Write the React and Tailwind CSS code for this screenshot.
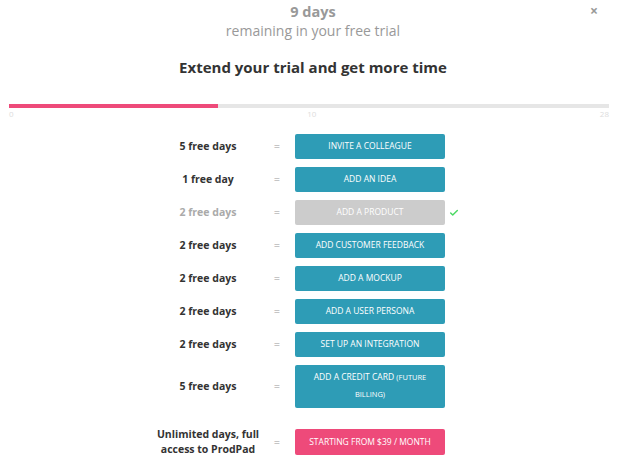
import { Check } from 'lucide-react';

const rows = [
  { label: '5 free days', action: 'INVITE A COLLEAGUE' },
  { label: '1 free day', action: 'ADD AN IDEA' },
  { label: '2 free days', action: 'ADD A PRODUCT', done: true },
  { label: '2 free days', action: 'ADD CUSTOMER FEEDBACK' },
  { label: '2 free days', action: 'ADD A MOCKUP' },
  { label: '2 free days', action: 'ADD A USER PERSONA' },
  { label: '2 free days', action: 'SET UP AN INTEGRATION' },
];

export default function App() {
  return (
    <div className="relative w-[626px] h-[468px] bg-white overflow-hidden" style={{ fontFamily: '"Open Sans", sans-serif' }}>
      <button className="absolute right-[28px] top-[4px] text-[14px] font-bold text-[#999] leading-none">×</button>

      <div className="flex flex-col items-center pt-[3px]">
        <p className="text-[14.5px] font-bold text-[#999] leading-[18px]">9 days</p>
        <p className="text-[14px] text-[#999] leading-[20px]">remaining in your free trial</p>
        <h1 className="mt-[16px] text-[15px] font-bold text-[#333] leading-[20px]">Extend your trial and get more time</h1>
      </div>

      {/* trial progress */}
      <div className="ml-[9px] mt-[27px] w-[600px]">
        <div className="h-[4px] bg-[#e6e6e6]">
          <div className="h-full w-[209px] bg-[#ee4a7a]" />
        </div>
        <div className="flex justify-between text-[8px] text-[#ddd] leading-[10px] mt-[1px]">
          <span>0</span>
          <span className="pl-[10px]">10</span>
          <span>28</span>
        </div>
      </div>

      <div className="mt-[15px] ml-[148px] flex flex-col gap-[8px]">
        {rows.map((r, i) => (
          <div key={i} className="flex items-center">
            <div className={`w-[120px] text-center text-[10.5px] font-bold ${r.done ? 'text-[#aaa]' : 'text-[#333]'}`}>{r.label}</div>
            <div className="w-[18px] mr-[9px] text-center text-[11px] text-[#999]">=</div>
            <div className={`w-[150px] h-[25px] rounded-[2px] flex items-center justify-center text-[8.5px] text-white ${r.done ? 'bg-[#cccccc]' : 'bg-[#2e9cb6]'}`}>
              {r.action}
            </div>
            {r.done && <Check className="ml-[4px] w-[10px] h-[10px] text-[#4cd964]" strokeWidth={3.5} />}
          </div>
        ))}
        <div className="flex items-center">
          <div className="w-[120px] text-center text-[10.5px] font-bold text-[#333]">5 free days</div>
          <div className="w-[18px] mr-[9px] text-center text-[11px] text-[#999]">=</div>
          <div className="w-[150px] h-[43px] rounded-[2px] bg-[#2e9cb6] pt-[3px] flex flex-col items-center text-[8.5px] leading-[17px] text-white">
            <p>ADD A CREDIT CARD <span className="text-[7.5px]">(FUTURE</span></p>
            <p className="text-[7.5px]">BILLING)</p>
          </div>
        </div>
        <div className="flex items-center mt-[11px]">
          <div className="w-[120px] px-[5px] text-center text-[10.5px] font-bold text-[#333] leading-[15px]">Unlimited days, full access to ProdPad</div>
          <div className="w-[18px] mr-[9px] text-center text-[11px] text-[#999]">=</div>
          <div className="w-[150px] h-[26px] rounded-[2px] bg-[#ee4a7a] flex items-center justify-center text-[8.5px] text-white">
            STARTING FROM $39 / MONTH
          </div>
        </div>
      </div>
    </div>
  );
}
